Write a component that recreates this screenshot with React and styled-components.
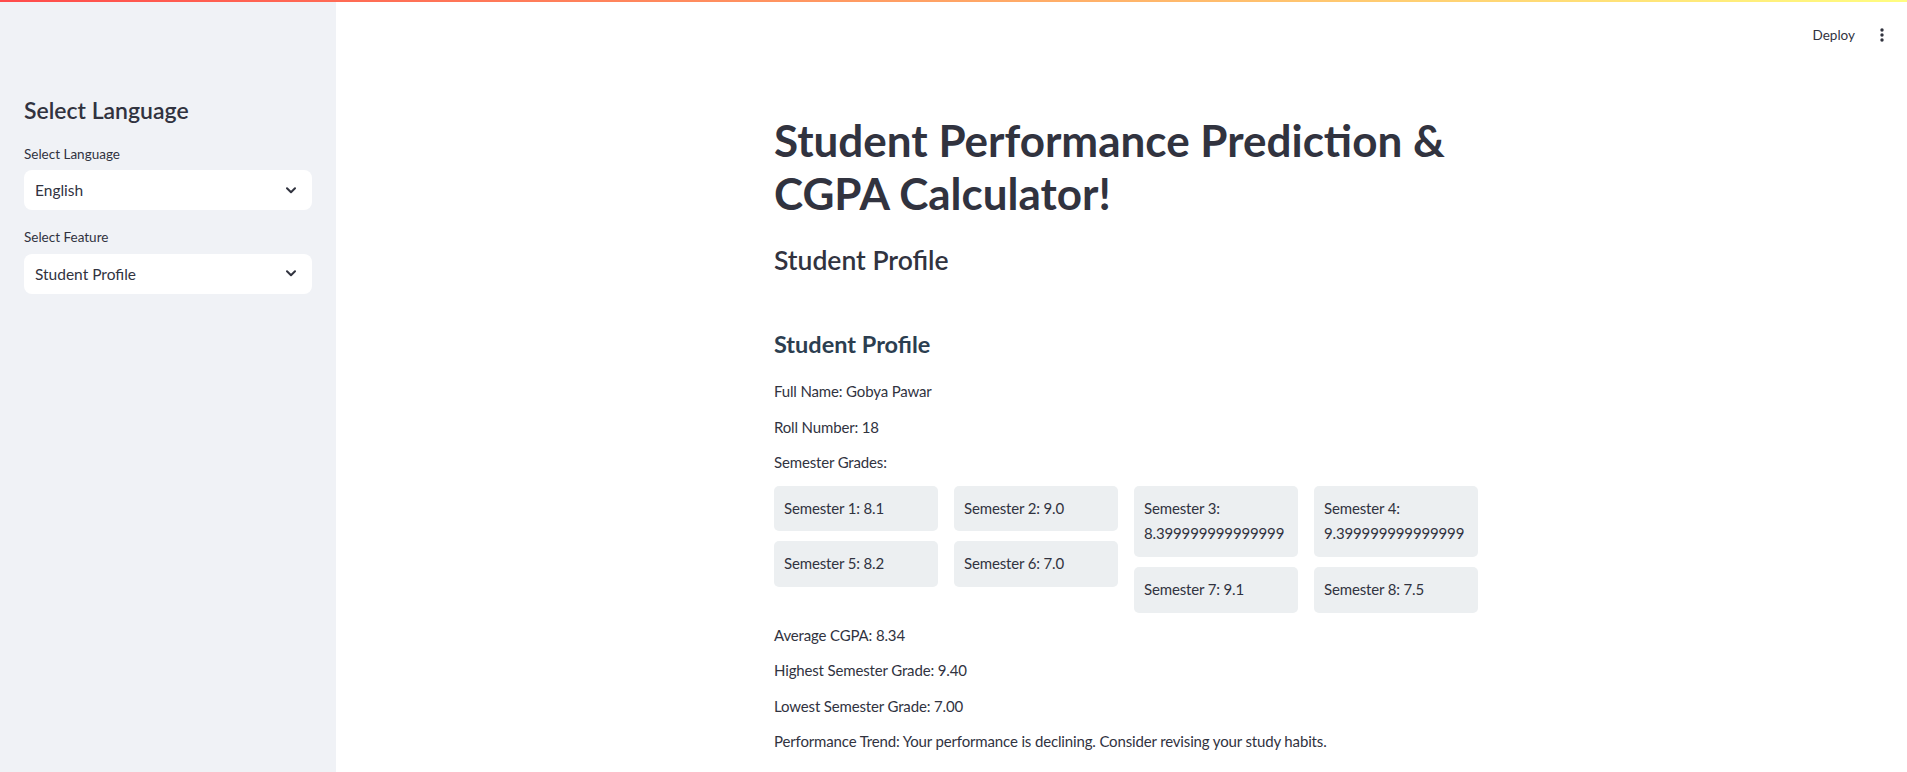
import styled, { createGlobalStyle } from "styled-components";

const GlobalStyle = createGlobalStyle`
  html, body {
    margin: 0;
    padding: 0;
    background: #ffffff;
  }
  body {
    font-family: "Source Sans Pro", Lato, "Noto Sans", sans-serif;
    color: #31333f;
  }
  * {
    box-sizing: border-box;
  }
`;

const StyledDecoration = styled.div`
  position: fixed;
  top: 0;
  left: 0;
  right: 0;
  height: 2px;
  background-image: linear-gradient(90deg, #ff4b4b, #fffd80);
  z-index: 10;
`;

const StyledApp = styled.div`
  display: flex;
  height: 100vh;
  overflow: hidden;
`;

const StyledSidebar = styled.aside`
  width: 336px;
  flex-shrink: 0;
  background-color: #f0f2f6;
  padding: 97px 24px 0;
  display: flex;
  flex-direction: column;
`;

const StyledSidebarTitle = styled.h2`
  margin: 0 0 19px;
  font-size: 23px;
  font-weight: 600;
  line-height: 27px;
  color: #31333f;
`;

const StyledLabel = styled.label`
  display: block;
  font-size: 13.5px;
  line-height: 22.4px;
  margin-bottom: 5px;
`;

const StyledSelect = styled.div`
  height: 40px;
  background-color: #ffffff;
  border-radius: 8px;
  display: flex;
  align-items: center;
  justify-content: space-between;
  padding: 0 16px 0 11px;
  font-size: 15.5px;
  margin-bottom: ${(props) => props.$gap || "0px"};
`;

const StyledMain = styled.main`
  flex: 1;
  display: flex;
  flex-direction: column;
  min-width: 0;
`;

const StyledHeader = styled.header`
  height: 70px;
  display: flex;
  justify-content: flex-end;
  align-items: center;
  gap: 25px;
  padding-right: 23px;
`;

const StyledDeploy = styled.span`
  font-size: 13.5px;
  color: #31333f;
  cursor: pointer;
`;

const StyledBody = styled.div`
  display: flex;
  justify-content: center;
  padding-left: 9px;
  padding-top: 44px;
`;

const StyledContent = styled.div`
  width: 704px;
`;

const StyledTitle = styled.h1`
  margin: 0 0 26px;
  font-size: 44px;
  font-weight: 700;
  line-height: 53px;
  color: #31333f;
`;

const StyledHeading = styled.h2`
  margin: 0 0 57px;
  font-size: 26.5px;
  font-weight: 600;
  line-height: 29px;
  color: #31333f;
`;

const StyledSubHeading = styled.h3`
  margin: 0 0 22px;
  font-size: 23.5px;
  font-weight: 700;
  line-height: 25px;
  color: #2c3e50;
`;

const StyledText = styled.p`
  margin: 0 0 10px;
  font-size: 15px;
  line-height: 25.6px;
  letter-spacing: -0.15px;
`;

const StyledGrid = styled.div`
  display: grid;
  grid-template-columns: repeat(4, minmax(0, 1fr));
  column-gap: 16px;
  align-items: start;
  margin-bottom: 10px;
`;

const StyledColumn = styled.div`
  display: flex;
  flex-direction: column;
  gap: 10px;
`;

const StyledGradeBox = styled.div`
  background-color: #eceff1;
  border-radius: 5px;
  padding: 10px;
  font-size: 15px;
  line-height: 25.6px;
  letter-spacing: -0.15px;
`;

const Chevron = () => (
  <svg width="10" height="7" viewBox="0 0 10 7" fill="none">
    <path d="M1 1.2 L5 5.2 L9 1.2" stroke="#31333f" strokeWidth="2" strokeLinecap="round" strokeLinejoin="round" />
  </svg>
);

const Kebab = () => (
  <svg width="4" height="14" viewBox="0 0 4 14">
    <circle cx="2" cy="2" r="1.7" fill="#31333f" />
    <circle cx="2" cy="7" r="1.7" fill="#31333f" />
    <circle cx="2" cy="12" r="1.7" fill="#31333f" />
  </svg>
);

const grades = [8.1, 9.0, 8.399999999999999, 9.399999999999999, 8.2, 7.0, 9.1, 7.5];

const fmt = (g) => (Number.isInteger(g) ? g.toFixed(1) : String(g));

const App = () => {
  const columns = [0, 1, 2, 3].map((c) => [c, c + 4]);
  const avg = grades.reduce((a, b) => a + b, 0) / grades.length;
  return (
    <>
      <GlobalStyle />
      <StyledDecoration />
      <StyledApp>
        <StyledSidebar>
          <StyledSidebarTitle>Select Language</StyledSidebarTitle>
          <StyledLabel>Select Language</StyledLabel>
          <StyledSelect $gap="16px">
            <span>English</span>
            <Chevron />
          </StyledSelect>
          <StyledLabel>Select Feature</StyledLabel>
          <StyledSelect>
            <span>Student Profile</span>
            <Chevron />
          </StyledSelect>
        </StyledSidebar>
        <StyledMain>
          <StyledHeader>
            <StyledDeploy>Deploy</StyledDeploy>
            <Kebab />
          </StyledHeader>
          <StyledBody>
            <StyledContent>
              <StyledTitle>Student Performance Prediction &amp; CGPA Calculator!</StyledTitle>
              <StyledHeading>Student Profile</StyledHeading>
              <StyledSubHeading>Student Profile</StyledSubHeading>
              <StyledText>Full Name: Gobya Pawar</StyledText>
              <StyledText>Roll Number: 18</StyledText>
              <StyledText>Semester Grades:</StyledText>
              <StyledGrid>
                {columns.map((col, i) => (
                  <StyledColumn key={i}>
                    {col.map((idx) => (
                      <StyledGradeBox key={idx}>
                        Semester {idx + 1}: {fmt(grades[idx])}
                      </StyledGradeBox>
                    ))}
                  </StyledColumn>
                ))}
              </StyledGrid>
              <StyledText>Average CGPA: {avg.toFixed(2)}</StyledText>
              <StyledText>Highest Semester Grade: 9.40</StyledText>
              <StyledText>Lowest Semester Grade: 7.00</StyledText>
              <StyledText>
                Performance Trend: Your performance is declining. Consider revising your study habits.
              </StyledText>
            </StyledContent>
          </StyledBody>
        </StyledMain>
      </StyledApp>
    </>
  );
};

export default App;
